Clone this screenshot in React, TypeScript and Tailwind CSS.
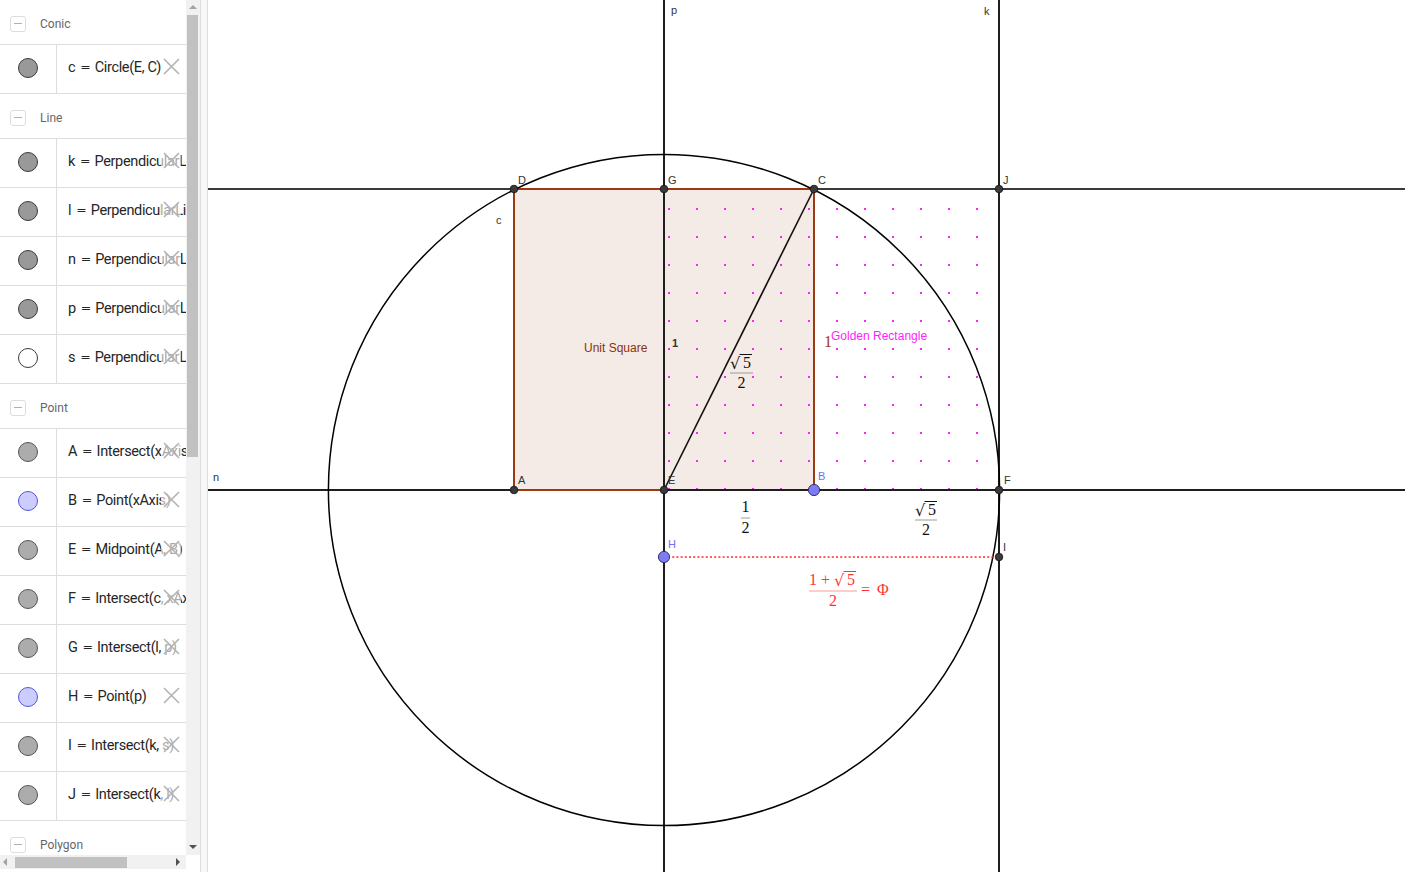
import React from 'react';

type Kind = 'dark' | 'point' | 'blue' | 'white';
type Row = { n: string; d: string; k: Kind };

const groups: { title: string; rows: Row[] }[] = [
  { title: 'Conic', rows: [{ n: 'c', d: 'Circle(E, C)', k: 'dark' }] },
  {
    title: 'Line',
    rows: [
      { n: 'k', d: 'PerpendicularLine(F, n)', k: 'dark' },
      { n: 'l', d: 'PerpendicularLine(D, p)', k: 'dark' },
      { n: 'n', d: 'PerpendicularLine(E, p)', k: 'dark' },
      { n: 'p', d: 'PerpendicularLine(E, xAxis)', k: 'dark' },
      { n: 's', d: 'PerpendicularLine(H, p)', k: 'white' },
    ],
  },
  {
    title: 'Point',
    rows: [
      { n: 'A', d: 'Intersect(xAxis, c)', k: 'point' },
      { n: 'B', d: 'Point(xAxis)', k: 'blue' },
      { n: 'E', d: 'Midpoint(A, B)', k: 'point' },
      { n: 'F', d: 'Intersect(c, xAxis)', k: 'point' },
      { n: 'G', d: 'Intersect(l, p)', k: 'point' },
      { n: 'H', d: 'Point(p)', k: 'blue' },
      { n: 'I', d: 'Intersect(k, s)', k: 'point' },
      { n: 'J', d: 'Intersect(k, l)', k: 'point' },
    ],
  },
  { title: 'Polygon', rows: [] },
];

const circleCls: Record<Kind, string> = {
  dark: 'bg-[#999999] border-[#3a3a3a]',
  point: 'bg-[#acacac] border-[#555555]',
  blue: 'bg-[#ccccff] border-[#5555dd]',
  white: 'bg-white border-[#3a3a3a]',
};

function Header({ title }: { title: string }) {
  return (
    <div className="flex h-[45px] shrink-0 items-center border-b border-[#dddddd] pt-[3px]">
      <div className="ml-[10px] flex h-[16px] w-[16px] items-center justify-center rounded-[3px] border border-[#dddddd]">
        <div className="h-[1.5px] w-[8px] bg-[#b0b0b0]" />
      </div>
      <span className="ml-[14px] text-[12px] text-[#666666]">{title}</span>
    </div>
  );
}

function ItemRow({ row }: { row: Row }) {
  return (
    <div className="flex h-[49px] shrink-0 border-b border-[#dddddd]">
      <div className="flex w-[57px] shrink-0 items-center justify-center border-r border-[#dddddd] pb-[2px]">
        <div className={`h-[20px] w-[20px] rounded-full border ${circleCls[row.k]}`} />
      </div>
      <div className="relative flex flex-1 items-center overflow-hidden whitespace-nowrap pb-[3px] pl-[11px] text-[14.5px] tracking-[-0.35px] text-[#262626]">
        <span>{row.n}</span>
        <span className="ml-[5px] mr-[4px] font-['DejaVu_Sans',sans-serif] text-[12.5px] tracking-normal">=</span>
        <span>{row.d}</span>
        <div className="absolute left-[104px] top-1/2 mt-[-3px] flex h-[20px] w-[20px] -translate-y-1/2 items-center justify-center bg-white/60">
          <svg width="17" height="17" viewBox="0 0 17 17">
            <path d="M1 1 L16 16 M16 1 L1 16" stroke="#b3b3b3" strokeWidth="1.6" fill="none" />
          </svg>
        </div>
      </div>
    </div>
  );
}

function Sqrt5({ x, y, color }: { x: number; y: number; color: string }) {
  return (
    <g fill={color}>
      <text x={x} y={y + 1} style={{ fontFamily: '"DejaVu Serif", "Liberation Serif", serif', fontSize: 16 }}>
        √
      </text>
      <line x1={x + 9.5} y1={y - 13.5} x2={x + 22} y2={y - 13.5} stroke={color} strokeWidth="1" />
      <text x={x + 13} y={y} style={{ fontFamily: '"Liberation Serif", serif', fontSize: 16 }}>
        5
      </text>
    </g>
  );
}

function Graphics() {
  const darkPts: [number, number][] = [
    [514, 189],
    [664, 189],
    [814, 189],
    [999, 189],
    [514, 490],
    [664, 490],
    [999, 490],
    [999, 557],
  ];
  const lbl = { fontFamily: '"Liberation Sans", Arial, sans-serif', fontSize: 11 };
  const serif = { fontFamily: '"Liberation Serif", "DejaVu Serif", serif', fontSize: 16 };
  return (
    <svg width="1197" height="872" viewBox="208 0 1197 872" className="block">
      <defs>
        <pattern id="dots" patternUnits="userSpaceOnUse" x="668" y="208" width="28" height="28">
          <rect x="0" y="0" width="2" height="2" fill="#ff22ff" />
        </pattern>
      </defs>
      <rect x="514" y="189" width="300" height="301" fill="#f4ebe6" />
      <rect x="664" y="189" width="335" height="301" fill="url(#dots)" />
      <line x1="208" y1="189" x2="1405" y2="189" stroke="#3a3a3a" strokeWidth="2" />
      <line x1="208" y1="490" x2="1405" y2="490" stroke="#1e1e1e" strokeWidth="2" />
      <g stroke="#9b3a12" strokeWidth="2" fill="none">
        <line x1="514" y1="189" x2="814" y2="189" />
        <line x1="514" y1="189" x2="514" y2="490" />
        <line x1="514" y1="490" x2="664" y2="490" />
        <line x1="814" y1="490" x2="814" y2="189" />
      </g>
      <line x1="664" y1="0" x2="664" y2="872" stroke="#1e1e1e" strokeWidth="2" />
      <line x1="999" y1="0" x2="999" y2="872" stroke="#1e1e1e" strokeWidth="2" />
      <circle cx="664" cy="490" r="335.6" fill="none" stroke="#000" strokeWidth="1.5" />
      <line x1="664" y1="490" x2="814" y2="189" stroke="#111" strokeWidth="1.6" />
      <line x1="668" y1="557" x2="995" y2="557" stroke="#ff2a2a" strokeWidth="1.5" strokeDasharray="2 2.2" />
      {darkPts.map(([x, y], i) => (
        <circle key={i} cx={x} cy={y} r="3.8" fill="#3a3a3a" stroke="#111" strokeWidth="0.8" />
      ))}
      <circle cx="814" cy="490" r="5.6" fill="#7c7cf4" stroke="#33336a" strokeWidth="1" />
      <circle cx="664" cy="557" r="5.6" fill="#7c7cf4" stroke="#33336a" strokeWidth="1" />

      <g style={lbl} fill="#333">
        <text x="518" y="184">D</text>
        <text x="668" y="184">G</text>
        <text x="818" y="184">C</text>
        <text x="1003" y="184">J</text>
        <text x="518" y="484">A</text>
        <text x="668" y="484">E</text>
        <text x="1004" y="484">F</text>
        <text x="1003" y="551">I</text>
        <text x="496" y="224">c</text>
        <text x="671" y="14">p</text>
        <text x="984" y="15">k</text>
        <text x="213" y="481">n</text>
        <text x="672" y="347" fontWeight="bold">1</text>
      </g>
      <g style={lbl} fill="#7070f0">
        <text x="818" y="480">B</text>
        <text x="668" y="548">H</text>
      </g>
      <text x="584" y="352" style={{ ...lbl, fontSize: 12 }} fill="#8b3209">
        Unit Square
      </text>
      <text x="831" y="340" style={{ ...lbl, fontSize: 12 }} fill="#ff22ff">
        Golden Rectangle
      </text>
      <text x="824" y="347" style={serif} fill="#9b3a12">
        1
      </text>

      <Sqrt5 x={730} y={368} color="#111" />
      <g style={serif} fill="#111">
        <line x1="730" y1="373" x2="753" y2="373" stroke="#9a9a9a" strokeWidth="1" />
        <text x="741.5" y="388" textAnchor="middle">2</text>
      </g>
      <g style={serif} fill="#111">
        <text x="745.5" y="512" textAnchor="middle">1</text>
        <line x1="741" y1="518" x2="750" y2="518" stroke="#9a9a9a" strokeWidth="1" />
        <text x="745.5" y="533" textAnchor="middle">2</text>
      </g>
      <Sqrt5 x={915} y={515} color="#111" />
      <g style={serif} fill="#111">
        <line x1="915" y1="520" x2="937" y2="520" stroke="#9a9a9a" strokeWidth="1" />
        <text x="926" y="535" textAnchor="middle">2</text>
      </g>
      <g style={serif} fill="#ff3333">
        <text x="809" y="585">1</text>
        <text x="821" y="585">+</text>
      </g>
      <Sqrt5 x={834} y={585} color="#ff3333" />
      <g style={serif} fill="#ff3333">
        <line x1="809" y1="591" x2="857" y2="591" stroke="#ff9a9a" strokeWidth="1.2" />
        <text x="833" y="606" textAnchor="middle">2</text>
        <text x="861" y="595">=</text>
        <text x="877" y="595">Φ</text>
      </g>
    </svg>
  );
}

export default function App() {
  return (
    <div
      className="flex h-[872px] w-[1405px] overflow-hidden bg-white"
      style={{ fontFamily: 'Roboto, "Liberation Sans", Arial, sans-serif' }}
    >
      <div className="flex w-[200px] shrink-0 flex-col">
        <div className="flex h-[855px] shrink-0">
          <div className="flex w-[186px] shrink-0 flex-col overflow-hidden">
            {groups.map((g) => (
              <React.Fragment key={g.title}>
                <Header title={g.title} />
                {g.rows.map((r) => (
                  <ItemRow key={r.n} row={r} />
                ))}
              </React.Fragment>
            ))}
          </div>
          <div className="relative w-[14px] shrink-0 bg-[#f1f1f1]">
            <div className="absolute left-[3px] top-[5px] h-0 w-0 border-x-[4px] border-b-[4px] border-x-transparent border-b-[#a3a3a3]" />
            <div className="absolute left-[1px] top-[15px] h-[442px] w-[11px] bg-[#c1c1c1]" />
            <div className="absolute bottom-[6px] left-[3px] h-0 w-0 border-x-[4px] border-t-[4px] border-x-transparent border-t-[#505050]" />
          </div>
        </div>
        <div className="flex h-[14px] shrink-0">
          <div className="relative w-[186px] shrink-0 bg-[#f1f1f1]">
            <div className="absolute left-[3px] top-[3px] h-0 w-0 border-y-[4px] border-r-[4px] border-y-transparent border-r-[#a3a3a3]" />
            <div className="absolute left-[15px] top-[2px] h-[11px] w-[112px] bg-[#c1c1c1]" />
            <div className="absolute right-[6px] top-[3px] h-0 w-0 border-y-[4px] border-l-[4px] border-y-transparent border-l-[#505050]" />
          </div>
          <div className="flex-1 bg-white" />
        </div>
        <div className="flex-1 bg-white" />
      </div>
      <div className="w-[8px] shrink-0 border-x border-[#dddddd] bg-[#f7f7f7]" />
      <div className="flex-1 overflow-hidden">
        <Graphics />
      </div>
    </div>
  );
}
